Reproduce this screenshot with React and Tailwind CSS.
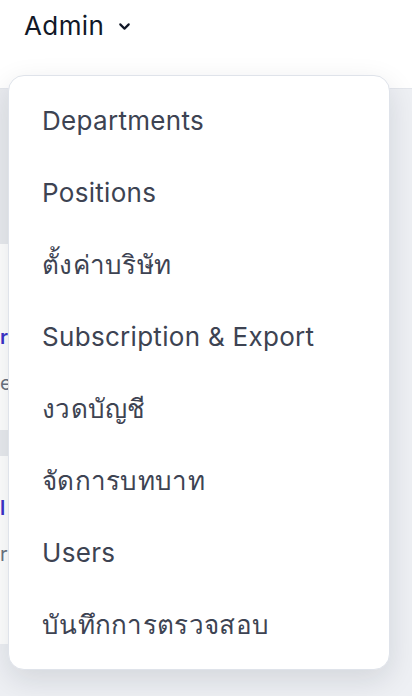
import { ChevronDown } from 'lucide-react';

const items = [
    'Departments',
    'Positions',
    'ตั้งค่าบริษัท',
    'Subscription & Export',
    'งวดบัญชี',
    'จัดการบทบาท',
    'Users',
    'บันทึกการตรวจสอบ',
];

const App = () => {
    return (
        <div
            className="relative w-[412px] h-[696px] overflow-hidden bg-[#eef0f4]"
            style={{ fontFamily: 'Inter, "Noto Sans", sans-serif' }}
        >
            {/* top bar */}
            <header className="h-[89px] bg-white border-b border-[#e3e6ec]">
                <button className="flex items-center gap-[12px] pl-6 pt-[9px] text-[#111827]">
                    <span className="text-[26px] leading-[34px] font-normal tracking-[0.4px]">Admin</span>
                    <ChevronDown className="h-[17px] w-[17px] mt-[1px]" strokeWidth={3} />
                </button>
            </header>

            {/* page content peeking out behind the menu */}
            <main className="flex flex-col w-[385px]">
                <div className="h-[155px] bg-[#e9ebef]" />
                <div className="bg-white h-[186px] flex flex-col pt-[83px] gap-[26px]">
                    <span className="text-[20px] leading-[20px] font-semibold text-[#3b32c9]">r</span>
                    <span className="text-[20px] leading-[20px] text-[#6b7280]">e</span>
                </div>
                <div className="h-[26px] bg-[#e9ebef]" />
                <div className="bg-white h-[188px] flex flex-col pt-[42px] gap-[26px]">
                    <span className="text-[20px] leading-[20px] font-semibold text-[#3b32c9]">l</span>
                    <span className="text-[20px] leading-[20px] text-[#6b7280]">r</span>
                </div>
            </main>

            {/* dropdown menu */}
            <div className="absolute left-[8px] top-[75px] w-[382px] rounded-[16px] border border-[#dfe3ea] bg-white pt-[8px] pb-[9px] shadow-[0_10px_30px_rgba(15,23,42,0.12)]">
                {items.map((label) => (
                    <div
                        key={label}
                        className="h-[72px] flex items-center px-[33px] text-[26px] tracking-[0.3px] text-[#3d4352] whitespace-nowrap"
                    >
                        {label}
                    </div>
                ))}
            </div>
        </div>
    );
};

export default App;
